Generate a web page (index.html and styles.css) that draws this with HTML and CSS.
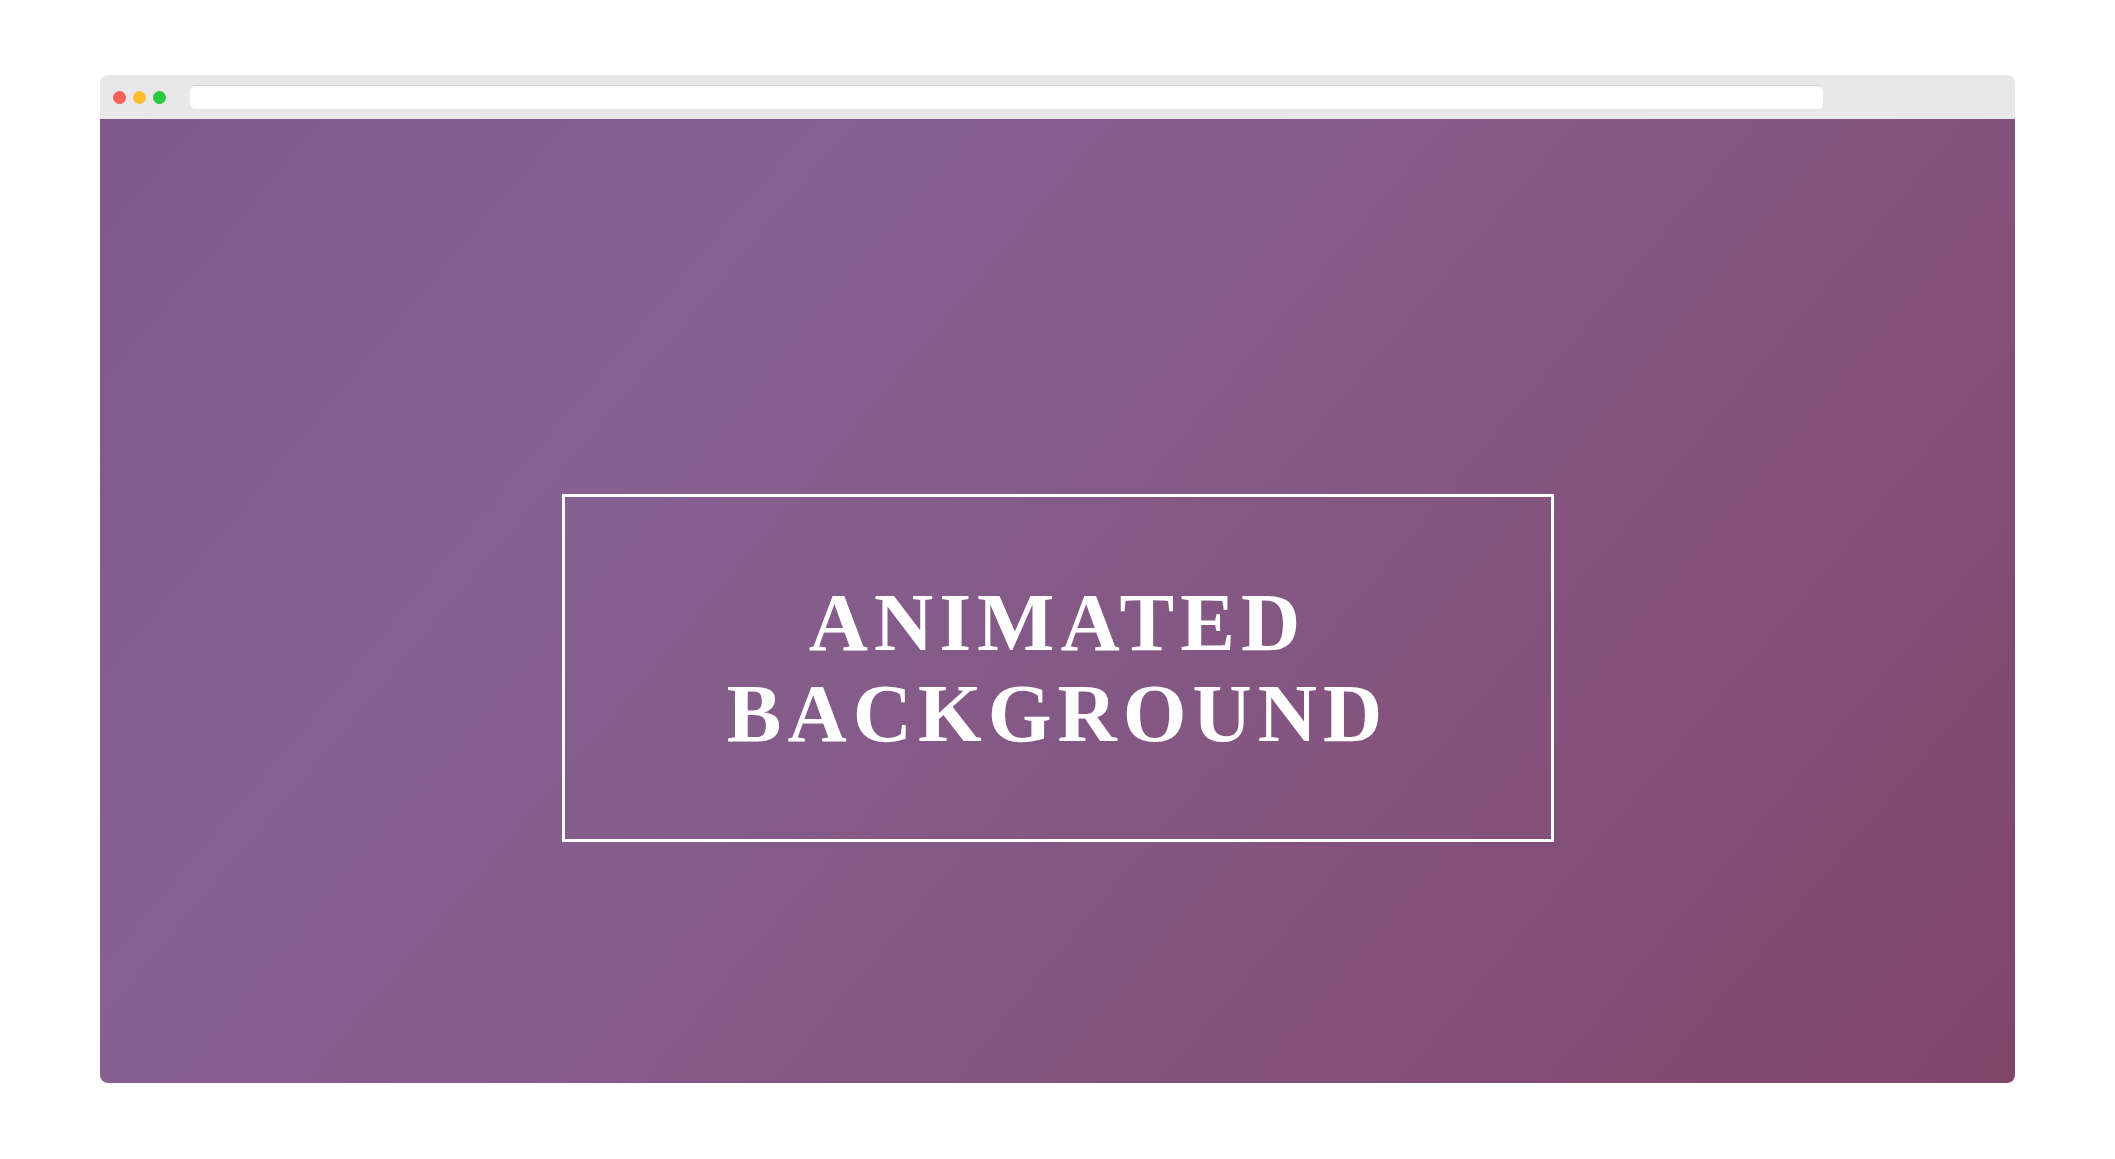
FILE: index.html
```html
<!DOCTYPE html>
<html lang="en">
<head>
<meta charset="utf-8">
<title>Animated Background</title>
<link rel="stylesheet" href="styles.css">
</head>
<body>
<div class="page">
  <div class="window">
    <div class="titlebar">
      <div class="dots">
        <span class="dot dot-red"></span>
        <span class="dot dot-yellow"></span>
        <span class="dot dot-green"></span>
      </div>
      <div class="address"></div>
    </div>
    <div class="content">
      <div class="frame">
        <h1 class="title">ANIMATED<br>BACKGROUND</h1>
      </div>
    </div>
  </div>
</div>
</body>
</html>
```

FILE: styles.css
```css
html, body {
  margin: 0;
  padding: 0;
  background: #ffffff;
}

.page {
  padding: 75px 100px 76px 100px;
  font-family: "Liberation Serif", "Times New Roman", serif;
}

.window {
  width: 1915px;
  border-radius: 8px;
  overflow: hidden;
}

.titlebar {
  height: 44px;
  background: #e8e8e8;
  display: flex;
  align-items: center;
}

.dots {
  display: flex;
  gap: 7px;
  padding-left: 13px;
  width: 77px;
}

.dot {
  width: 13px;
  height: 13px;
  border-radius: 50%;
  display: block;
}

.dot-red { background: #fe5f57; }
.dot-yellow { background: #febc2e; }
.dot-green { background: #28c840; }

.address {
  width: 1633px;
  height: 24px;
  background: #ffffff;
  border-radius: 5px;
  box-shadow: inset 0 1px 0 #cfcfcf;
}

.content {
  height: 964px;
  background: linear-gradient(130deg, #7e588a 0%, #866193 27%, #845783 58%, #81456a 100%);
  display: flex;
  flex-direction: column;
  align-items: center;
  padding-top: 375px;
  box-sizing: border-box;
}

.frame {
  width: 992px;
  height: 348px;
  box-sizing: border-box;
  border: 3px solid #ffffff;
  display: flex;
  align-items: center;
  justify-content: center;
}

.title {
  margin: 0;
  color: #ffffff;
  font-weight: bold;
  font-size: 82px;
  line-height: 91px;
  letter-spacing: 6px;
  text-align: center;
}
```
